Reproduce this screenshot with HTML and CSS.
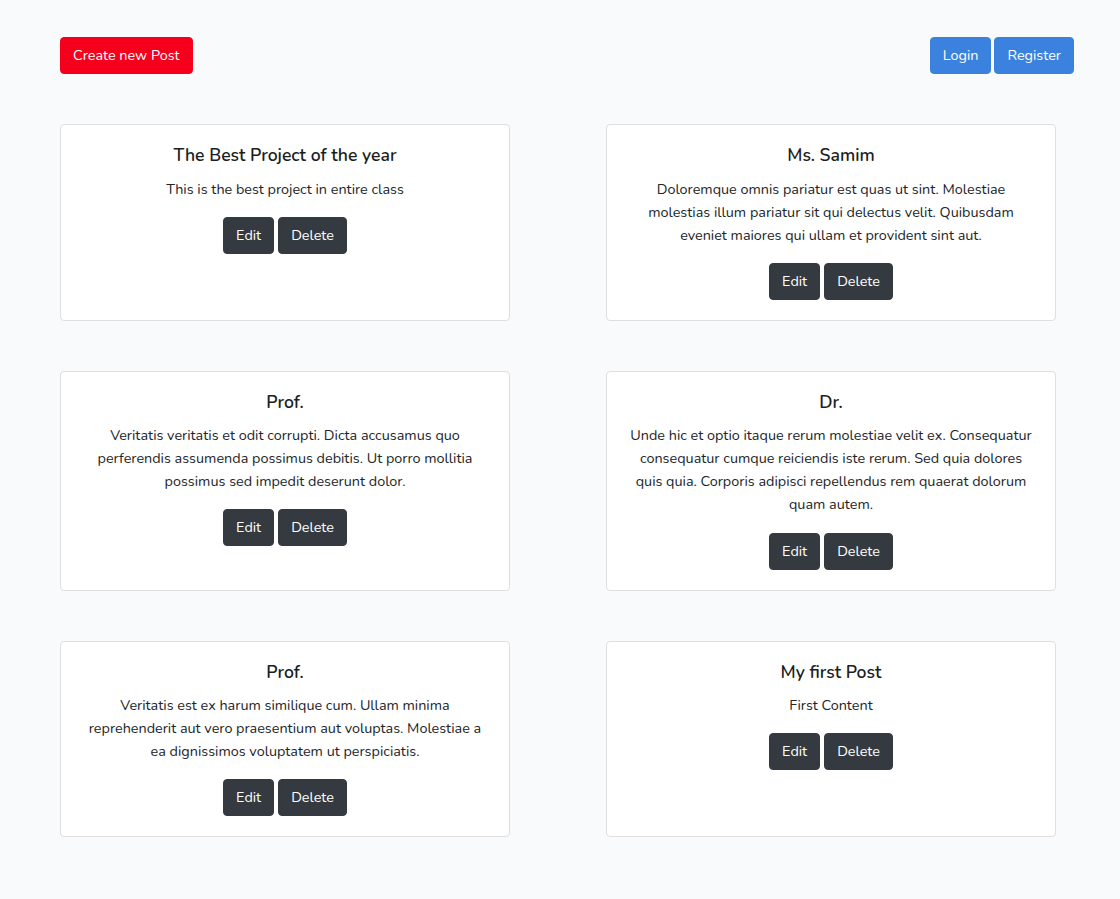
FILE: index.html
```html
<!DOCTYPE html>
<html>
<head>
<meta charset="utf-8">
<link rel="stylesheet" href="styles.css">
</head>
<body>
<div class="topbar">
  <a class="btn btn-red">Create new Post</a>
  <div class="auth">
    <a class="btn btn-blue">Login</a>
    <a class="btn btn-blue">Register</a>
  </div>
</div>
<div class="grid">
  <div class="card">
    <h5 class="title">The Best Project of the year</h5>
    <p class="text">This is the best project in entire class</p>
    <div class="actions"><a class="btn btn-dark">Edit</a><a class="btn btn-dark">Delete</a></div>
  </div>
  <div class="card">
    <h5 class="title">Ms. Samim</h5>
    <p class="text">Doloremque omnis pariatur est quas ut sint. Molestiae molestias illum pariatur sit qui delectus velit. Quibusdam eveniet maiores qui ullam et provident sint aut.</p>
    <div class="actions"><a class="btn btn-dark">Edit</a><a class="btn btn-dark">Delete</a></div>
  </div>
  <div class="card">
    <h5 class="title">Prof.</h5>
    <p class="text">Veritatis veritatis et odit corrupti. Dicta accusamus quo perferendis assumenda possimus debitis. Ut porro mollitia possimus sed impedit deserunt dolor.</p>
    <div class="actions"><a class="btn btn-dark">Edit</a><a class="btn btn-dark">Delete</a></div>
  </div>
  <div class="card">
    <h5 class="title">Dr.</h5>
    <p class="text">Unde hic et optio itaque rerum molestiae velit ex. Consequatur consequatur cumque reiciendis iste rerum. Sed quia dolores quis quia. Corporis adipisci repellendus rem quaerat dolorum quam autem.</p>
    <div class="actions"><a class="btn btn-dark">Edit</a><a class="btn btn-dark">Delete</a></div>
  </div>
  <div class="card">
    <h5 class="title">Prof.</h5>
    <p class="text">Veritatis est ex harum similique cum. Ullam minima reprehenderit aut vero praesentium aut voluptas. Molestiae a ea dignissimos voluptatem ut perspiciatis.</p>
    <div class="actions"><a class="btn btn-dark">Edit</a><a class="btn btn-dark">Delete</a></div>
  </div>
  <div class="card">
    <h5 class="title">My first Post</h5>
    <p class="text">First Content</p>
    <div class="actions"><a class="btn btn-dark">Edit</a><a class="btn btn-dark">Delete</a></div>
  </div>
</div>
</body>
</html>
```
FILE: styles.css
```css
body {
  margin: 0;
  background: #f8fafc;
  font-family: "Nunito", Lato, "Noto Sans", sans-serif;
  font-size: 14.4px;
  line-height: 1.6;
  color: #212529;
}
.topbar {
  display: flex;
  justify-content: space-between;
  align-items: flex-start;
  padding: 37px 46px 0 60px;
}
.auth {
  display: flex;
  gap: 3px;
}
.btn {
  display: inline-block;
  box-sizing: border-box;
  height: 37px;
  padding: 6px 12px;
  border: 1px solid transparent;
  border-radius: 4px;
  color: #fff;
  font-size: 14.4px;
  line-height: 23px;
  cursor: pointer;
}
.btn-red { background: #f4001c; border-color: #f4001c; }
.btn-blue { background: #3a82de; border-color: #3a82de; }
.btn-dark { background: #343a40; border-color: #343a40; }
.grid {
  display: grid;
  grid-template-columns: 450px 450px;
  column-gap: 96px;
  row-gap: 50px;
  padding: 50px 0 0 60px;
}
.card {
  box-sizing: border-box;
  background: #fff;
  border: 1px solid #dfdfdf;
  border-radius: 4px;
  padding: 20px 20px 20px;
  text-align: center;
}
.title {
  margin: 0 0 11px;
  font-size: 17.6px;
  font-weight: 600;
  line-height: 21.6px;
  color: #1b1e21;
}
.text {
  margin: 0 0 16px;
}
.actions {
  display: flex;
  justify-content: center;
  gap: 4px;
}
```
